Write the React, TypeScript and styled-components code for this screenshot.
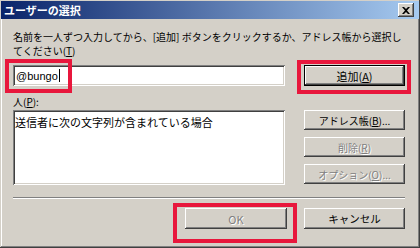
import React from "react";
import styled, { createGlobalStyle, css } from "styled-components";

const face = "#D4D0C8";
const shadow = "#808080";
const darkShadow = "#404040";
const highlight = "#ffffff";
const mark = "#E8173C";

const GlobalStyle = createGlobalStyle`
  html, body {
    margin: 0;
    padding: 0;
    background: ${face};
  }
  body {
    font-family: "Noto Sans CJK JP", "Liberation Sans", sans-serif;
  }
`;

const Window = styled.div`
  position: relative;
  box-sizing: border-box;
  width: 420px;
  height: 248px;
  padding: 1px;
  background: ${face};
  box-shadow: inset -1px -1px ${darkShadow}, inset 1px 1px ${face},
    inset -2px -2px ${shadow}, inset 2px 2px ${highlight};
  display: flex;
  flex-direction: column;
`;

const TitleBar = styled.div`
  height: 18px;
  display: flex;
  align-items: center;
  justify-content: space-between;
  padding: 0 5px 0 3px;
  background: linear-gradient(to right, #0a246a, #a6caf0);
`;

const Title = styled.span`
  color: #fff;
  font-size: 11px;
  font-weight: bold;
  line-height: 18px;
`;

const raised = css`
  background: ${face};
  box-shadow: inset -1px -1px ${darkShadow}, inset 1px 1px ${highlight},
    inset -2px -2px ${shadow}, inset 2px 2px ${face};
`;

const sunken = css`
  background: #fff;
  box-shadow: inset 1px 1px ${shadow}, inset -1px -1px ${highlight},
    inset 2px 2px ${darkShadow}, inset -2px -2px ${face};
`;

const CloseButton = styled.div`
  ${raised};
  width: 16px;
  height: 14px;
  display: flex;
  align-items: center;
  justify-content: center;
`;

const Body = styled.div`
  flex: 1;
  display: flex;
  flex-direction: column;
  padding: 11px 14px 0 12px;
`;

const Label = styled.div<{ $top?: number }>`
  font-size: 10px;
  line-height: 14px;
  color: #000;
  white-space: nowrap;
  margin-top: ${(p) => p.$top ?? 0}px;
`;

const Row = styled.div<{ $top: number }>`
  display: flex;
  gap: 19px;
  margin-top: ${(p) => p.$top}px;
`;

const TextBox = styled.div`
  ${sunken};
  box-sizing: border-box;
  width: 272px;
  height: 21px;
  display: flex;
  align-items: center;
  padding-left: 3px;
  font-family: "Liberation Sans", sans-serif;
  font-size: 11px;
`;

const Caret = styled.span`
  display: inline-block;
  width: 1px;
  height: 13px;
  background: #000;
  margin-left: 1px;
`;

const ListBox = styled.div`
  ${sunken};
  box-sizing: border-box;
  width: 272px;
  height: 75px;
  padding: 5px 2px;
  font-size: 11px;
  line-height: 14px;
  white-space: nowrap;
`;

const ButtonColumn = styled.div`
  display: flex;
  flex-direction: column;
  gap: 7px;
`;

const Button = styled.div<{
  $disabled?: boolean;
  $default?: boolean;
  $w?: number;
  $h?: number;
  $size?: number;
}>`
  ${raised};
  box-sizing: border-box;
  width: ${(p) => p.$w ?? 101}px;
  height: ${(p) => p.$h ?? 20}px;
  display: flex;
  align-items: center;
  justify-content: center;
  font-size: ${(p) => p.$size ?? 10}px;
  color: ${(p) => (p.$disabled ? shadow : "#000")};
  text-shadow: ${(p) => (p.$disabled ? `1px 1px ${highlight}` : "none")};
  ${(p) =>
    p.$default &&
    css`
      border: 1px solid #000;
    `}
`;

const Separator = styled.div`
  margin-top: 12px;
  height: 0;
  border-top: 1px solid ${shadow};
  border-bottom: 1px solid ${highlight};
`;

const Footer = styled.div`
  display: flex;
  justify-content: flex-end;
  gap: 17px;
  margin-top: 9px;
`;

const Callout = styled.div<{ $x: number; $y: number; $w: number; $h: number }>`
  position: absolute;
  left: ${(p) => p.$x}px;
  top: ${(p) => p.$y}px;
  width: ${(p) => p.$w}px;
  height: ${(p) => p.$h}px;
  box-sizing: border-box;
  border: 4px solid ${mark};
  pointer-events: none;
`;

const App: React.FC = () => {
  return (
    <>
      <GlobalStyle />
      <Window>
        <TitleBar>
          <Title>ユーザーの選択</Title>
          <CloseButton>
            <svg width="8" height="7" viewBox="0 0 8 7">
              <path d="M0 0h2l2 2 2-2h2L5 3.5 8 7H6L4 5 2 7H0l3-3.5z" fill="#000" />
            </svg>
          </CloseButton>
        </TitleBar>
        <Body>
          <Label>
            名前を一人ずつ入力してから、[追加] ボタンをクリックするか、アドレス帳から選択し
            <br />
            てください(<u>T</u>)
          </Label>
          <Row $top={7}>
            <TextBox>
              @bungo
              <Caret />
            </TextBox>
            <Button $default $h={21} $size={11}>
              追加(<u>A</u>)
            </Button>
          </Row>
          <Label $top={9}>
            人(<u>P</u>):
          </Label>
          <Row $top={1}>
            <ListBox>送信者に次の文字列が含まれている場合</ListBox>
            <ButtonColumn>
              <Button>
                アドレス帳(<u>B</u>)...
              </Button>
              <Button $disabled>
                削除(<u>R</u>)
              </Button>
              <Button $disabled>
                オプション(<u>O</u>)...
              </Button>
            </ButtonColumn>
          </Row>
          <Separator />
          <Footer>
            <Button $disabled $w={102} $h={21} $size={11}>
              OK
            </Button>
            <Button $h={21} $size={10.5}>
              キャンセル
            </Button>
          </Footer>
        </Body>
        <Callout $x={5} $y={59} $w={67} $h={34} />
        <Callout $x={297} $y={60} $w={114} $h={34} />
        <Callout $x={173} $y={203} $w={124} $h={40} />
      </Window>
    </>
  );
};

export default App;
